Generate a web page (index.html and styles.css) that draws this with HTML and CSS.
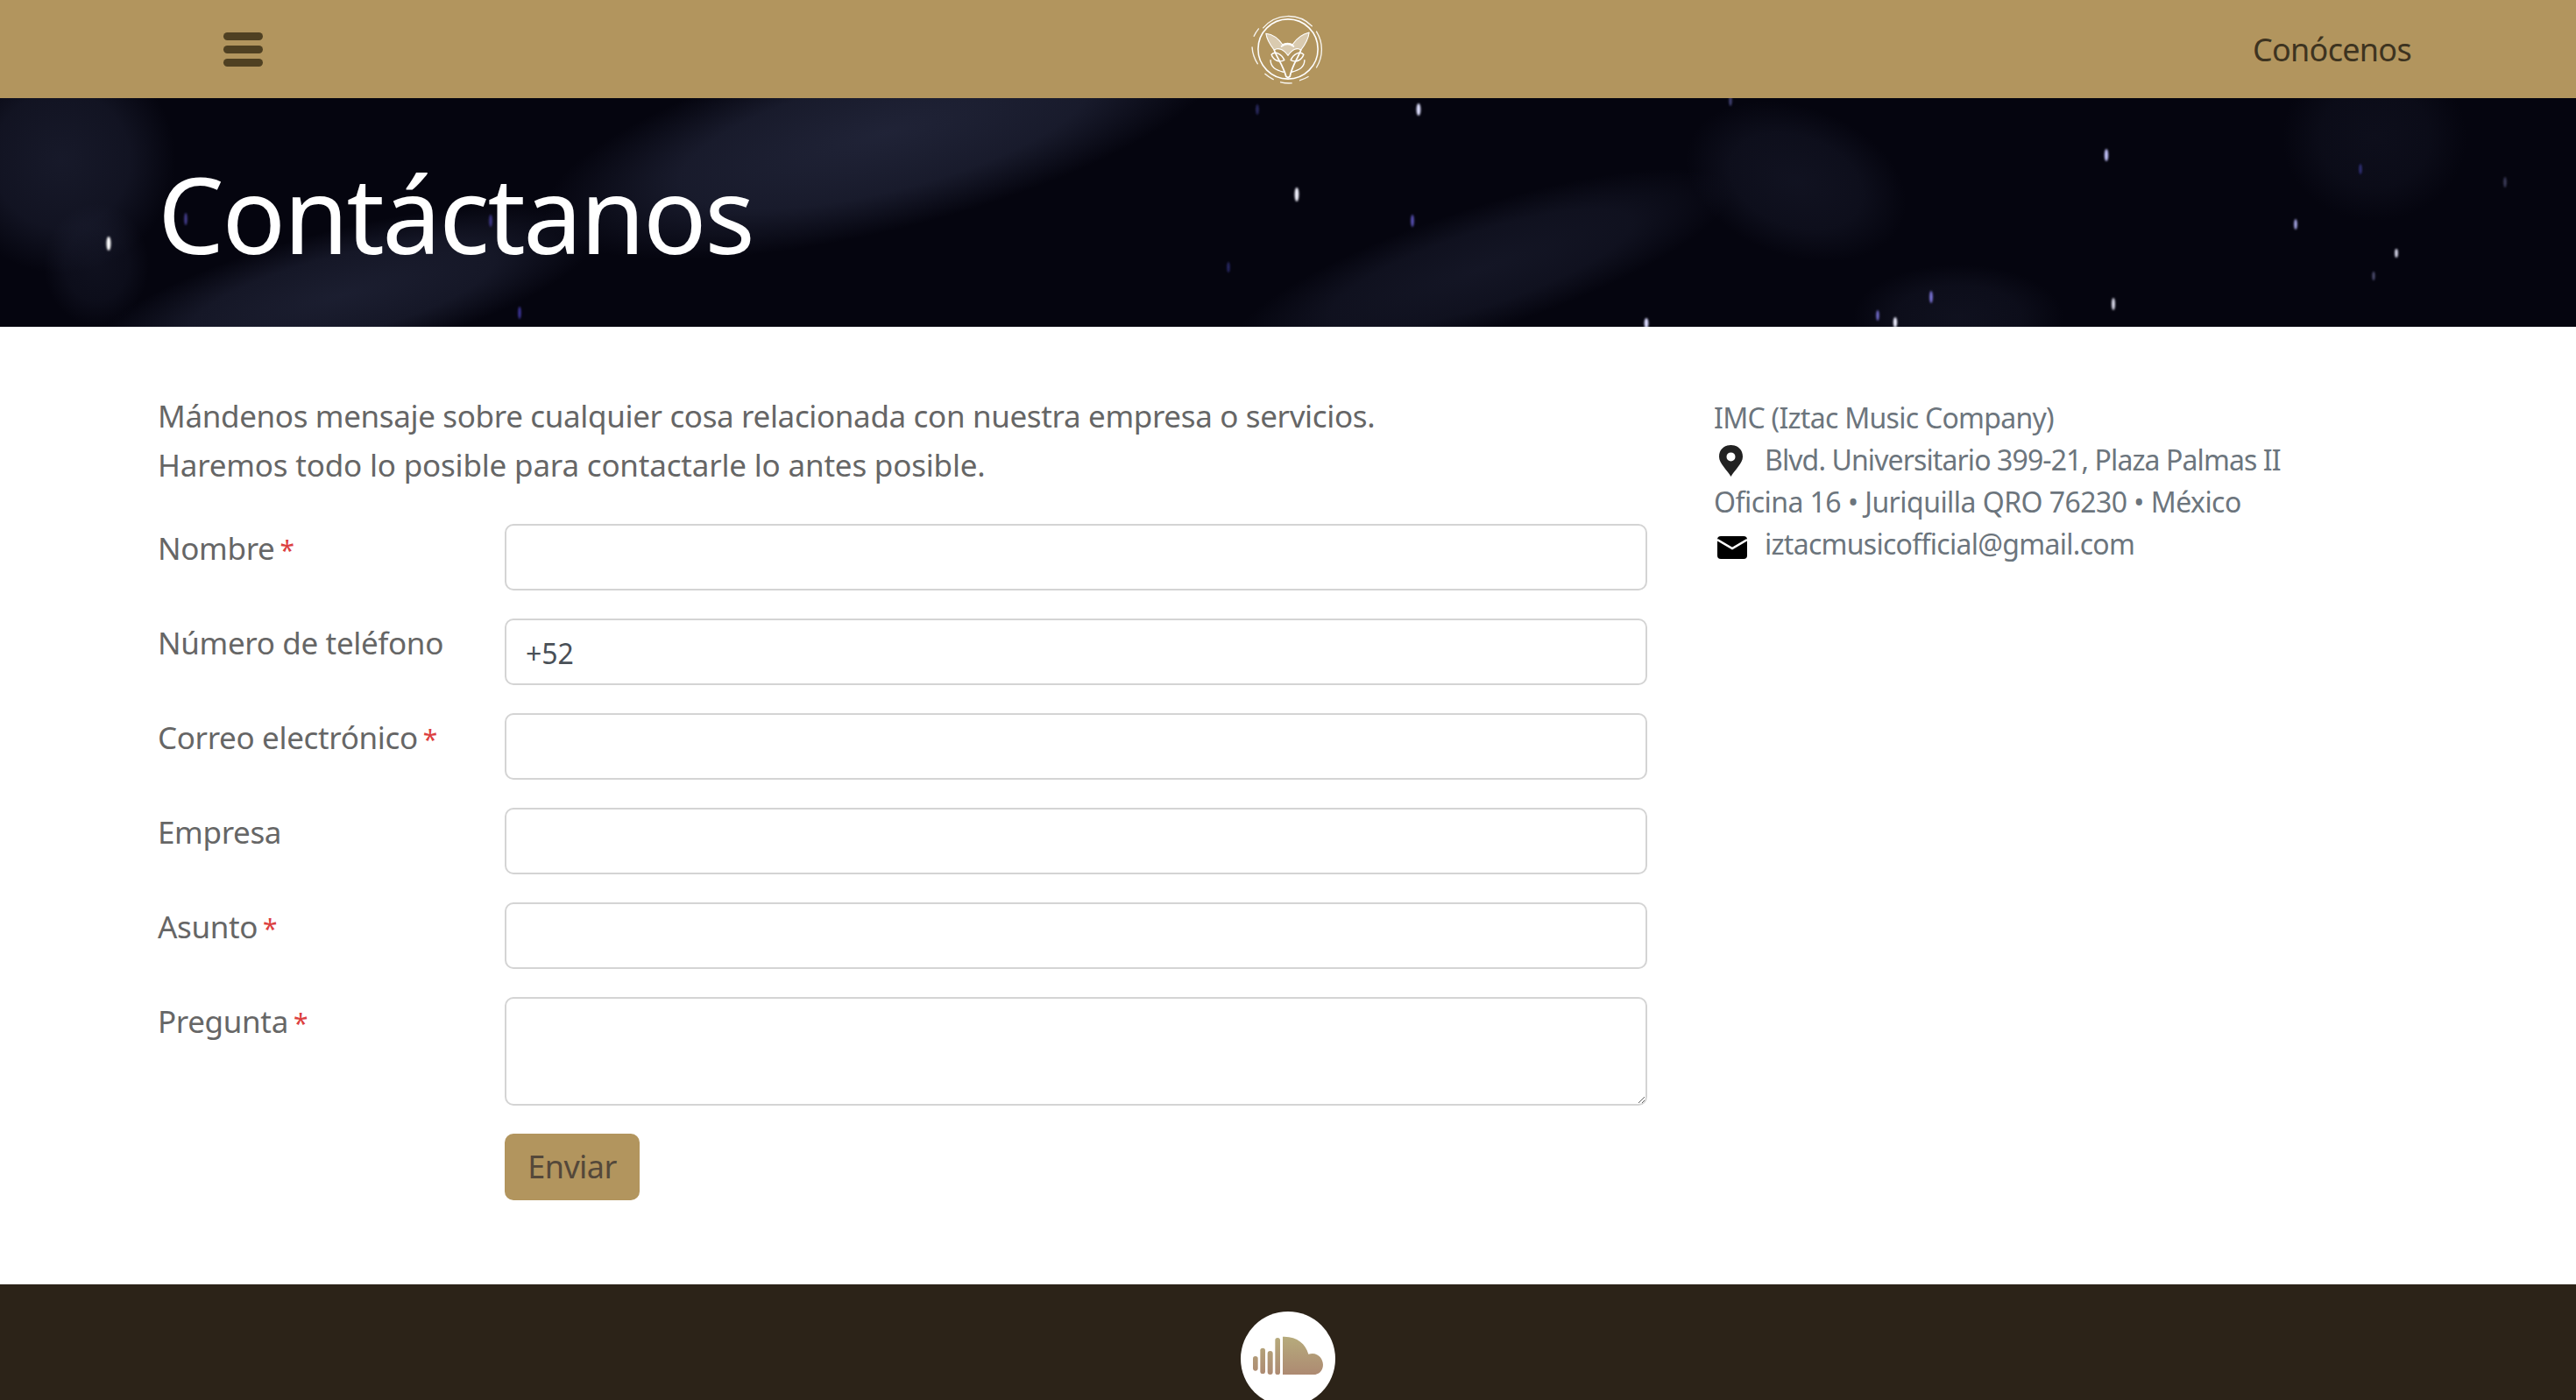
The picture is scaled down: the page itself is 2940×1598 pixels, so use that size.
FILE: index.html
```html
<!DOCTYPE html>
<html lang="es">
<head>
<meta charset="utf-8">
<title>Contáctanos</title>
<link rel="stylesheet" href="styles.css">
</head>
<body>
<header class="topbar">
  <div class="topbar-left">
    <button class="burger" aria-label="Menú"><span></span><span></span><span></span></button>
  </div>
  <svg class="logo" viewBox="0 0 80 80" fill="none" stroke="#fff" stroke-linecap="round" stroke-linejoin="round">
    <g stroke-width="1.3" opacity=".9">
      <path d="M13 17 A36 36 0 0 1 66 15"/>
      <path d="M71 21 A37 37 0 0 1 71 60"/>
      <path d="M62 70 A37 37 0 0 1 53 74"/>
      <path d="M44 77 A37 37 0 0 1 32 76"/>
      <path d="M24 73 A37 37 0 0 1 15 67"/>
      <path d="M7 56 A37 37 0 0 1 1 38"/>
      <path d="M3 26 A37 37 0 0 1 8 18"/>
    </g>
    <circle cx="40" cy="40" r="32.5" stroke-width="1.5"/>
    <path d="M16 23 C24 24 30 29 34 35 C37 33 42 33 45 35 C49 29 55 24 63 22 C62 30 58 36 54 41 C50 38 45 40 40 47 C35 40 29 38 25 41 C21 36 17 30 16 23Z" fill="#fff" fill-opacity=".5" stroke-width="1"/>
    <path d="M25 41 C28 50 34 56 38 70 L40 71 L42 70 C45 56 51 50 54 41" stroke-width="1.7"/>
    <path d="M33 37 C37 34 42 34 46 37" stroke-width="1.8"/>
    <path d="M22 46 C26 42 33 45 36 52 C30 55 24 52 22 46Z M57 46 C53 42 46 45 43 52 C49 55 55 52 57 46Z" stroke-width="1.4"/>
    <path d="M21 52 C21 60 27 63 35 65 M58 52 C58 60 52 63 44 65" stroke-width="1.3"/>
  </svg>
  <nav class="topbar-right"><a class="nav-link" href="#">Conócenos</a></nav>
</header>

<section class="hero">
  <svg class="hero-sky" viewBox="0 0 2940 261" preserveAspectRatio="none" aria-hidden="true">
    <defs>
      <radialGradient id="haze">
        <stop offset="0" stop-color="#262a40" stop-opacity=".9"/>
        <stop offset=".6" stop-color="#262a40" stop-opacity=".65"/>
        <stop offset="1" stop-color="#262a40" stop-opacity="0"/>
      </radialGradient>
      <filter id="star" x="-200%" y="-100%" width="500%" height="300%"><feGaussianBlur stdDeviation=".8"/></filter>
    </defs>
    <rect width="2940" height="261" fill="#05050f"/>
    <g fill="url(#haze)">
      <ellipse cx="70" cy="70" rx="130" ry="130" opacity=".6"/>
      <ellipse cx="110" cy="190" rx="60" ry="70" opacity=".35"/>
      <ellipse cx="1010" cy="40" rx="400" ry="110" opacity=".9" transform="rotate(-14 1010 40)"/>
      <ellipse cx="390" cy="225" rx="300" ry="75" opacity=".75" transform="rotate(-14 390 225)"/>
      <ellipse cx="1690" cy="195" rx="300" ry="70" opacity=".5" transform="rotate(-18 1690 195)"/>
      <ellipse cx="2050" cy="95" rx="130" ry="85" opacity=".4" transform="rotate(20 2050 95)"/>
      <ellipse cx="2710" cy="45" rx="105" ry="95" opacity=".28"/>
      <ellipse cx="2235" cy="250" rx="120" ry="60" opacity=".35"/>
    </g>
    <g filter="url(#star)">
      <ellipse cx="124" cy="166" rx="2.5" ry="8" fill="#fff"/>
      <ellipse cx="212" cy="138" rx="1.6" ry="7" fill="#4a4298"/>
      <ellipse cx="560" cy="140" rx="1.8" ry="7" fill="#3e3788"/>
      <ellipse cx="593" cy="245" rx="1.6" ry="7" fill="#4038a0"/>
      <ellipse cx="1480" cy="110" rx="2.4" ry="8" fill="#f4f4ff"/>
      <ellipse cx="1435" cy="13" rx="1.6" ry="6" fill="#2e2e68"/>
      <ellipse cx="1402" cy="193" rx="1.6" ry="6" fill="#2a2a6a"/>
      <ellipse cx="1619" cy="13" rx="2.4" ry="7" fill="#dfe0ff"/>
      <ellipse cx="1612" cy="140" rx="1.8" ry="7" fill="#5a52b8"/>
      <ellipse cx="1975" cy="3" rx="1.6" ry="6" fill="#44447a"/>
      <ellipse cx="1879" cy="257" rx="2.4" ry="6" fill="#dcdcff"/>
      <ellipse cx="2143" cy="248" rx="1.6" ry="6" fill="#7a72d8"/>
      <ellipse cx="2163" cy="256" rx="2.2" ry="6" fill="#eeeeff"/>
      <ellipse cx="2204" cy="227" rx="1.8" ry="7" fill="#8078e0"/>
      <ellipse cx="2404" cy="65" rx="2.2" ry="7" fill="#c0c0f8"/>
      <ellipse cx="2412" cy="235" rx="2" ry="7" fill="#d8d8e8"/>
      <ellipse cx="2620" cy="144" rx="1.8" ry="6" fill="#a8a8e8"/>
      <ellipse cx="2694" cy="81" rx="1.6" ry="6" fill="#30307c"/>
      <ellipse cx="2709" cy="203" rx="1.4" ry="5" fill="#56567a"/>
      <ellipse cx="2735" cy="177" rx="1.8" ry="5" fill="#ddddf0"/>
      <ellipse cx="2859" cy="96" rx="1.6" ry="6" fill="#40405e"/>
    </g>
  </svg>
  <h1 class="hero-title">Contáctanos</h1>
</section>

<main class="content">
  <div class="form-col">
    <p class="intro">Mándenos mensaje sobre cualquier cosa relacionada con nuestra empresa o servicios.<br><span class="intro-second">Haremos todo lo posible para contactarle lo antes posible.</span></p>
    <form class="form-grid">
      <label class="field-label" for="f1">Nombre<span class="req">*</span></label>
      <input class="field" id="f1" type="text">
      <label class="field-label" for="f2">Número de teléfono</label>
      <input class="field" id="f2" type="text" value="+52">
      <label class="field-label" for="f3">Correo electrónico<span class="req">*</span></label>
      <input class="field" id="f3" type="text">
      <label class="field-label" for="f4">Empresa</label>
      <input class="field" id="f4" type="text">
      <label class="field-label" for="f5">Asunto<span class="req">*</span></label>
      <input class="field" id="f5" type="text">
      <label class="field-label" for="f6">Pregunta<span class="req">*</span></label>
      <textarea class="field field-area" id="f6"></textarea>
      <div class="actions"><button class="submit" type="button">Enviar</button></div>
    </form>
  </div>
  <address class="info">
    <div>IMC (Iztac Music Company)</div>
    <div class="info-tight">
      <svg class="icon-pin" viewBox="0 0 31 36"><path fill="#222" fill-rule="evenodd" d="M15.5 0C7 0 2 6 2 13.2 2 21 11 28 15.5 36 20 28 29 21 29 13.2 29 6 24 0 15.5 0Zm0 8.4a5 5 0 1 1 0 10 5 5 0 0 1 0-10Z"/></svg>Blvd. Universitario 399-21, Plaza Palmas II
    </div>
    <div class="info-loose">Oficina 16 • Juriquilla QRO 76230 • México</div>
    <div>
      <svg class="icon-mail" viewBox="0 0 34 26"><rect width="34" height="26" rx="4" fill="#000"/><path d="M0 4 L17 14 L34 4" fill="none" stroke="#fff" stroke-width="2.6"/></svg>iztacmusicofficial@gmail.com
    </div>
  </address>
</main>

<footer class="footer">
  <a class="social" href="#" aria-label="SoundCloud">
    <svg viewBox="0 0 324 324" class="social-icon">
      <defs><linearGradient id="sc" x1="0" y1="86" x2="0" y2="216" gradientUnits="userSpaceOnUse"><stop offset="0" stop-color="#b6ab7c"/><stop offset="1" stop-color="#ad8a72"/></linearGradient></defs>
      <g fill="url(#sc)">
        <rect x="42" y="153" width="17" height="50" rx="8.5"/>
        <rect x="67" y="125" width="17" height="88" rx="8.5"/>
        <rect x="92" y="135" width="18" height="81" rx="9"/>
        <rect x="118" y="90" width="17" height="126" rx="8.5"/>
        <path d="M144 86 C192 84 222 110 232 146 C262 136 282 160 282 182 C282 204 266 216 250 216 L144 216Z"/>
      </g>
    </svg>
  </a>
</footer>
</body>
</html>
```

FILE: styles.css
```css
* { box-sizing: border-box; }
html, body { margin: 0; padding: 0; height: 1598px; overflow: hidden; }
body {
  background: #fff;
  font-family: "Noto Sans", "Open Sans", sans-serif;
  color: #666;
}
.topbar {
  height: 112px;
  background: #b2955e;
  display: grid;
  grid-template-columns: 1fr auto 1fr;
  align-items: center;
}
.topbar-left { padding-left: 255px; }
.topbar-right { padding-right: 188px; text-align: right; }
.burger {
  display: flex;
  flex-direction: column;
  gap: 6px;
  width: 45px;
  padding: 0;
  border: 0;
  background: none;
}
.burger span {
  display: block;
  height: 9px;
  border-radius: 5px;
  background: #4f4022;
}
.logo { width: 84px; height: 84px; display: block; }
.nav-link {
  font-size: 36px;
  letter-spacing: -0.7px;
  color: #3d3320;
  text-decoration: none;
}
.hero {
  position: relative;
  height: 261px;
  background: #05050f;
  overflow: hidden;
  padding: 57px 0 0 180px;
}
.hero-sky {
  position: absolute;
  inset: 0;
  width: 100%;
  height: 100%;
}
.hero-title {
  position: relative;
  margin: 0;
  font-size: 120px;
  line-height: 150px;
  font-weight: 400;
  letter-spacing: -2.4px;
  color: #fff;
}
.content {
  display: grid;
  grid-template-columns: 1700px 1fr;
  column-gap: 76px;
  padding: 74px 0 96px 180px;
}
.intro {
  margin: 0 0 39px;
  font-size: 35px;
  line-height: 56px;
  letter-spacing: -0.35px;
  color: #666;
}
.intro-second { letter-spacing: -0.19px; }
.form-grid {
  display: grid;
  grid-template-columns: 396px 1fr;
  row-gap: 32px;
}
.field-label {
  font-size: 35px;
  line-height: 56px;
  letter-spacing: -0.35px;
  color: #666;
}
.req { color: #dc4040; font-size: 30px; margin-left: 6px; }
.field {
  display: block;
  width: 100%;
  height: 76px;
  padding: 2px 22px 0;
  border: 2px solid #d4d4d4;
  border-radius: 10px;
  background: #fff;
  font-family: inherit;
  font-size: 32px;
  color: #495057;
  outline: none;
}
.field-area { height: 124px; resize: vertical; }
.actions { grid-column: 2; }
.submit {
  display: block;
  width: 154px;
  height: 76px;
  padding: 0 0 2px;
  border: 0;
  border-radius: 10px;
  background: #b2955e;
  font-family: inherit;
  font-size: 36px;
  letter-spacing: -0.6px;
  color: #54483a;
}
.info {
  padding-top: 6px;
  font-style: normal;
  font-size: 32px;
  line-height: 48px;
  letter-spacing: -0.72px;
  color: #6c757d;
}
.info-tight { letter-spacing: -0.9px; }
.info-loose { letter-spacing: -0.54px; }
.icon-pin {
  width: 31px;
  height: 36px;
  margin: 0 23px 0 4px;
  vertical-align: -7px;
}
.icon-mail {
  width: 34px;
  height: 26px;
  margin: 0 20px 0 4px;
  vertical-align: -5px;
}
.footer {
  height: 132px;
  background: #2c2318;
  overflow: hidden;
  padding-top: 31px;
  display: flex;
  justify-content: center;
}
.social {
  display: block;
  width: 108px;
  height: 108px;
  flex: none;
  border-radius: 50%;
  background: #fff;
}
.social-icon { display: block; width: 108px; height: 108px; }
```
